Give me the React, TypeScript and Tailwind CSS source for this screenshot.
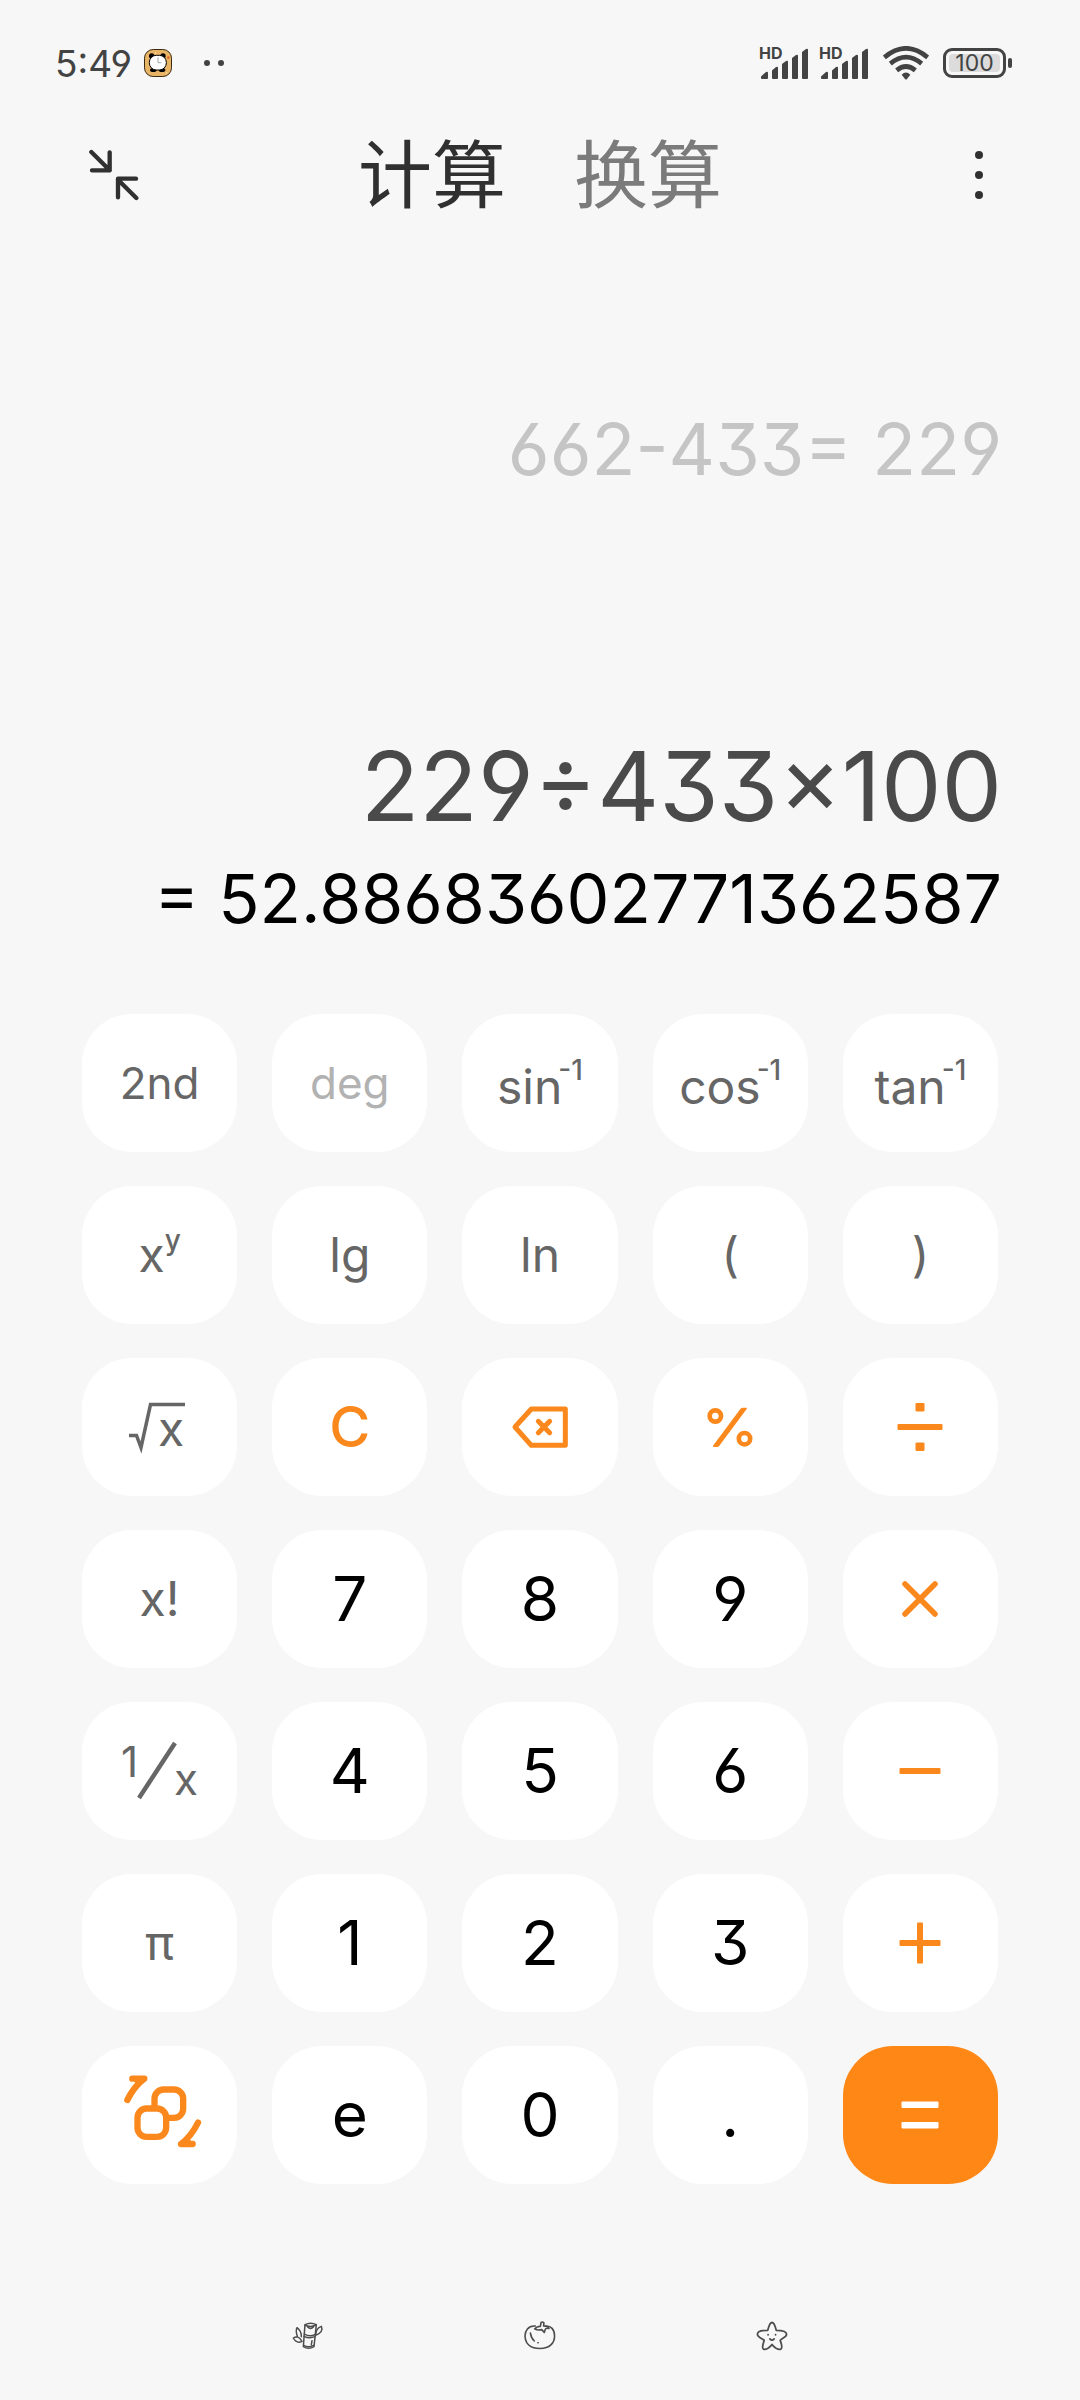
import React from "react";

type Tone = "fn" | "muted" | "num" | "op" | "equals";

type Key = { id: string; label: string; tone: Tone; face: React.ReactNode };

const toneClass: Record<Tone, string> = {
  fn: "bg-white text-[#666666] text-[48px]",
  muted: "bg-white text-[#b2b2b2] text-[44px]",
  num: "bg-white text-black text-[62px]",
  op: "bg-white text-[#fb881c] text-[56px]",
  equals: "bg-[#ff8716] text-white text-[56px]",
};

function Inverse({ name }: { name: string }) {
  return (
    <span>
      {name}
      <sup className="top-0 -ml-1 align-[24px] text-[28px] leading-none font-medium">-1</sup>
    </span>
  );
}

function RootIcon() {
  return (
    <svg viewBox="0 0 64 56" className="h-14 w-16 overflow-visible" fill="none" stroke="currentColor" strokeWidth="3.5">
      <path d="M1 36.5h7.500L13 48.500 22.500 5.500H57" />
      <text x="30" y="47" fontSize="48" fill="currentColor" stroke="none">x</text>
    </svg>
  );
}

function ReciprocalIcon() {
  return (
    <svg viewBox="0 0 78 60" className="h-[60px] w-[78px] overflow-visible" fill="none" stroke="currentColor" strokeWidth="4.5">
      <text x="0" y="36" fontSize="42" fill="currentColor" stroke="none">1</text>
      <path d="M18 57 54 2" />
      <text x="53" y="54" fontSize="44" fill="currentColor" stroke="none">x</text>
    </svg>
  );
}

function BackspaceIcon() {
  return (
    <svg viewBox="-90 1210 180 138" className="h-[46px] w-[60px]" fill="none" stroke="currentColor" strokeWidth="15" strokeLinejoin="round" strokeLinecap="round">
      <path d="M76 1225V1334H-26L-75 1279L-26 1225Z" />
      <path d="M-5 1262 29 1296M29 1262 -5 1296" />
    </svg>
  );
}

function PercentIcon() {
  return (
    <svg viewBox="497 1212 150 135" className="h-[45px] w-[50px]" fill="none" stroke="currentColor" strokeWidth="14">
      <circle cx="528" cy="1245" r="17" />
      <circle cx="615.500" cy="1313" r="17" />
      <path d="M521 1334q-1 4 3 4h9q4 0 7-4l82-110q2-4-2-4h-10q-4 0-7 4z" fill="currentColor" stroke="none" />
    </svg>
  );
}

function DivideIcon() {
  return (
    <svg viewBox="0 0 46 50" className="h-[50px] w-[46px]" fill="currentColor">
      <rect x="0.500" y="22" width="45" height="6" rx="1" />
      <rect x="18.500" y="1" width="9" height="8.500" rx="1.200" />
      <rect x="18.500" y="40.500" width="9" height="8.500" rx="1.200" />
    </svg>
  );
}

function TimesIcon() {
  return (
    <svg viewBox="0 0 36 36" className="h-9 w-9" fill="none" stroke="currentColor" strokeWidth="5.5" strokeLinecap="round">
      <path d="M3 3 33 33M33 3 3 33" />
    </svg>
  );
}

function MinusIcon() {
  return (
    <svg viewBox="0 0 42 42" className="h-[42px] w-[42px]" fill="currentColor">
      <rect x="0.500" y="18" width="41" height="6" rx="1" />
    </svg>
  );
}

function PlusIcon() {
  return (
    <svg viewBox="0 0 42 42" className="h-[42px] w-[42px]" fill="currentColor">
      <rect x="0.500" y="18" width="41" height="6" rx="1" />
      <rect x="18" y="0.500" width="6" height="41" rx="1" />
    </svg>
  );
}

function EqualsIcon() {
  return (
    <svg viewBox="0 0 38 28" className="h-7 w-[38px]" fill="currentColor">
      <rect x="0.500" y="0.500" width="37" height="6.500" rx="1" />
      <rect x="0.500" y="21" width="37" height="6.500" rx="1" />
    </svg>
  );
}

function SwapLayoutIcon() {
  return (
    <svg viewBox="170 640 258 246" className="h-[82px] w-[86px]" fill="none" stroke="currentColor" strokeWidth="19" strokeLinecap="round" strokeLinejoin="round">
      <rect x="282.500" y="686.500" width="86" height="85" rx="27" />
      <rect x="231.500" y="743.500" width="86" height="85" rx="27" fill="white" />
      <path d="M216 654H252Q222 676 201 718M242 658H230" />
      <path d="M397 850H362Q392 828 413 786M372 846H384" />
    </svg>
  );
}

const keys: Key[] = [
  { id: "2nd", label: "2nd", tone: "fn", face: <span className="text-[44px]">2nd</span> },
  { id: "deg", label: "deg", tone: "muted", face: "deg" },
  { id: "asin", label: "sin⁻¹", tone: "fn", face: <Inverse name="sin" /> },
  { id: "acos", label: "cos⁻¹", tone: "fn", face: <Inverse name="cos" /> },
  { id: "atan", label: "tan⁻¹", tone: "fn", face: <Inverse name="tan" /> },
  {
    id: "pow",
    label: "x to the power y",
    tone: "fn",
    face: (
      <span>
        x<sup className="top-0 align-[22px] text-[28px] leading-0 font-medium">y</sup>
      </span>
    ),
  },
  { id: "lg", label: "lg", tone: "fn", face: "lg" },
  { id: "ln", label: "ln", tone: "fn", face: "ln" },
  { id: "open", label: "(", tone: "fn", face: "(" },
  { id: "close", label: ")", tone: "fn", face: ")" },
  { id: "sqrt", label: "Square root", tone: "fn", face: <RootIcon /> },
  { id: "clear", label: "C", tone: "op", face: <span className="font-medium">C</span> },
  { id: "back", label: "Backspace", tone: "op", face: <BackspaceIcon /> },
  { id: "percent", label: "%", tone: "op", face: <PercentIcon /> },
  { id: "divide", label: "÷", tone: "op", face: <DivideIcon /> },
  { id: "fact", label: "x!", tone: "fn", face: "x!" },
  { id: "7", label: "7", tone: "num", face: "7" },
  { id: "8", label: "8", tone: "num", face: "8" },
  { id: "9", label: "9", tone: "num", face: "9" },
  { id: "times", label: "×", tone: "op", face: <TimesIcon /> },
  { id: "inv", label: "1/x", tone: "fn", face: <ReciprocalIcon /> },
  { id: "4", label: "4", tone: "num", face: "4" },
  { id: "5", label: "5", tone: "num", face: "5" },
  { id: "6", label: "6", tone: "num", face: "6" },
  { id: "minus", label: "−", tone: "op", face: <MinusIcon /> },
  { id: "pi", label: "π", tone: "fn", face: "π" },
  { id: "1", label: "1", tone: "num", face: "1" },
  { id: "2", label: "2", tone: "num", face: "2" },
  { id: "3", label: "3", tone: "num", face: "3" },
  { id: "plus", label: "+", tone: "op", face: <PlusIcon /> },
  { id: "swap", label: "Switch keypad", tone: "op", face: <SwapLayoutIcon /> },
  { id: "e", label: "e", tone: "num", face: "e" },
  { id: "0", label: "0", tone: "num", face: "0" },
  { id: "dot", label: ".", tone: "num", face: "." },
  { id: "equals", label: "=", tone: "equals", face: <EqualsIcon /> },
];

function ClockBadge() {
  return (
    <svg viewBox="0 0 84 84" className="h-7 w-7" aria-hidden="true">
      <rect x="1.500" y="1.500" width="81" height="81" rx="26" fill="#e8b566" stroke="#3a2a10" strokeWidth="3" />
      <circle cx="23" cy="21" r="8" fill="#000" />
      <circle cx="57" cy="21" r="8" fill="#000" />
      <ellipse cx="28" cy="63" rx="10" ry="6" fill="#000" />
      <ellipse cx="54" cy="63" rx="10" ry="6" fill="#000" />
      <rect x="16" y="19" width="51" height="44" rx="21" fill="#fff" stroke="#000" strokeWidth="3" />
      <path d="M42 25V41H52" fill="none" stroke="#9aa" strokeWidth="3" />
      <circle cx="73" cy="26" r="4" fill="#e0662a" />
      <circle cx="35" cy="12" r="2" fill="#fbe3a5" />
      <circle cx="68" cy="72" r="2" fill="#fbe3a5" />
    </svg>
  );
}

function Signal() {
  return (
    <div className="relative h-8 w-[50px]">
      <svg viewBox="0 0 50 32" className="h-8 w-[50px]" fill="currentColor" aria-hidden="true">
        <path d="M2 29.500l5-4.500q2-.8 2 1V31q0 1-1 1H3q-1 0-1-1z" />
        <path d="M13 23.500l4-3.500q2-.8 2 1V31q0 1-1 1h-4q-1 0-1-1z" />
        <path d="M23 17l4-3q2-.8 2 1V31q0 1-1 1h-4q-1 0-1-1z" />
        <path d="M33 11l4-3q2-.8 2 1V31q0 1-1 1h-4q-1 0-1-1z" />
        <path d="M43 5l4-3q2-.8 2 1V31q0 1-1 1h-4q-1 0-1-1z" />
      </svg>
      <span className="absolute -top-0.5 left-0 text-[16px] leading-4 font-bold">HD</span>
    </div>
  );
}

function Wifi() {
  return (
    <svg viewBox="0 0 138 102" className="h-[34px] w-[46px]" fill="none" stroke="currentColor" strokeWidth="14" aria-hidden="true">
      <path d="M4 34Q69-20 134 34" />
      <path d="M22 53Q69 14 116 53" />
      <path d="M41 73Q69 50 97 73" />
      <path d="M56 86Q69 73 82 86L72 99Q69 102 66 99Z" fill="currentColor" stroke="none" />
    </svg>
  );
}

function Battery() {
  return (
    <div className="flex items-center gap-0.5">
      <div className="flex h-[30px] w-[63px] items-stretch rounded-[9px] border-[3px] border-current p-[3px]">
        <span className="flex flex-1 items-center justify-center rounded-[4px] bg-[#dcdcdc] text-[23px] leading-none">100</span>
      </div>
      <div className="h-2.5 w-1 rounded-full bg-current" />
    </div>
  );
}

export default function App() {
  return (
    <div
      className="flex min-h-screen flex-col bg-[#f7f7f7] font-['Inter','Noto_Sans_CJK_SC',sans-serif]"
      style={{ fontFeatureSettings: '"cv03","cv04","cv09"' }}
    >
      <div className="flex h-[126px] items-center justify-between pr-[68px] pl-[55px] text-[#434343]">
        <div className="flex items-center">
          <span className="text-[37px] leading-none">5:49</span>
          <span className="ml-3 flex">
            <ClockBadge />
          </span>
          <span className="ml-8 flex gap-2">
            <i className="h-1.5 w-1.5 rounded-full bg-current" />
            <i className="h-1.5 w-1.5 rounded-full bg-current" />
          </span>
        </div>
        <div className="flex items-center">
          <Signal />
          <span className="ml-2.5 flex">
            <Signal />
          </span>
          <span className="mx-3.5 flex">
            <Wifi />
          </span>
          <Battery />
        </div>
      </div>

      <header className="flex h-[98px] items-center justify-between px-[89px] text-[#303030]">
        <button type="button" aria-label="Compact window" className="flex w-[52px]">
          <svg viewBox="2 0 156 156" className="h-[52px] w-[52px]" fill="none" stroke="currentColor" strokeWidth="13" strokeLinecap="round" strokeLinejoin="round">
            <path d="M9 9 64 64M64 10V64H11" />
            <path d="M144 147 89 92M89 145V89H143" />
          </svg>
        </button>
        <nav className="flex gap-[68px] text-[74px] leading-none">
          <button type="button">计算</button>
          <button type="button" className="text-[#7b7b7b]">换算</button>
        </nav>
        <button type="button" aria-label="More options" className="flex w-[52px] justify-end">
          <svg viewBox="0 0 24 52" className="h-[52px] w-6" fill="currentColor">
            <circle cx="12" cy="6" r="4" />
            <circle cx="12" cy="26" r="4" />
            <circle cx="12" cy="46" r="4" />
          </svg>
        </button>
      </header>

      <main className="flex flex-1 flex-col">
        <section className="flex flex-1 flex-col items-end justify-end pr-[78px] pb-[60px] pl-10">
          <p className="mb-[233px] text-[72px] leading-[96px] text-[#c5c5c5]">662-433= 229</p>
          <p className="text-[96px] leading-[112px] text-[#4a4a4a]">229÷433×100</p>
          <output className="text-[68px] leading-[112px] text-black">= 52.88683602771362587</output>
        </section>

        <section className="grid grid-cols-5 gap-x-[35px] gap-y-[34px] px-[82px]">
          {keys.map((k) => (
            <button
              key={k.id}
              type="button"
              aria-label={k.label}
              className={"flex h-[138px] items-center justify-center rounded-[50px] leading-none " + toneClass[k.tone]}
            >
              {k.face}
            </button>
          ))}
        </section>
      </main>

      <footer className="flex items-center justify-center gap-[200px] pt-[136px] pb-[48px] text-[#4d4d4d]">
        <button type="button" aria-label="Recent apps">
          <svg viewBox="0 0 96 84" className="h-8 w-8" fill="none" stroke="currentColor" strokeWidth="4.500" strokeLinecap="round" strokeLinejoin="round">
            <path d="M39 8Q56 -1 73 8L66 74Q50 84 34 74Z" />
            <path d="M39 9Q55 18 72 9M47 15Q56 24 64 15M37 36Q52 46 69 38M36 43Q52 51 69 44M35 70Q50 78 65 70M60 56L58 68" />
            <path d="M71 40Q70 20 88 13Q96 30 71 40Z" />
            <path d="M16 42Q10 28 15 17Q29 28 28 44M30 58Q18 38 4 48Q14 66 30 58Z" />
          </svg>
        </button>
        <button type="button" aria-label="Home">
          <svg viewBox="0 0 90 84" className="h-[30px] w-8" fill="none" stroke="currentColor" strokeWidth="4.500" strokeLinecap="round" strokeLinejoin="round">
            <path d="M32 14C12 12 2 28 3 44C5 66 20 77 45 77C72 77 86 62 86 42C86 24 76 12 60 14" />
            <path d="M46 15L48 4Q52 1 56 5L55 14Q68 14 70 21Q62 19 60 23L57 32L50 24Q38 27 30 22Q38 14 46 15Z" />
            <path d="M18 34Q20 48 29 56M39 61L40 61" />
          </svg>
        </button>
        <button type="button" aria-label="Back">
          <svg viewBox="0 0 90 84" className="h-[30px] w-8" fill="none" stroke="currentColor" strokeWidth="5" strokeLinecap="round" strokeLinejoin="round">
            <path d="M33 26C37 10 40 4 45 4C50 4 53 10 57 26C72 26 86 28 86 37C86 45 74 48 68 54C72 66 76 74 70 79C62 82 54 76 45 66C36 76 28 82 21 79C15 74 20 66 23 54C16 48 4 45 4 37C4 28 18 26 33 26Z" />
            <path d="M34 38V38.500M55 38V38.500M39 50Q45 57 51 50" />
          </svg>
        </button>
      </footer>
    </div>
  );
}
